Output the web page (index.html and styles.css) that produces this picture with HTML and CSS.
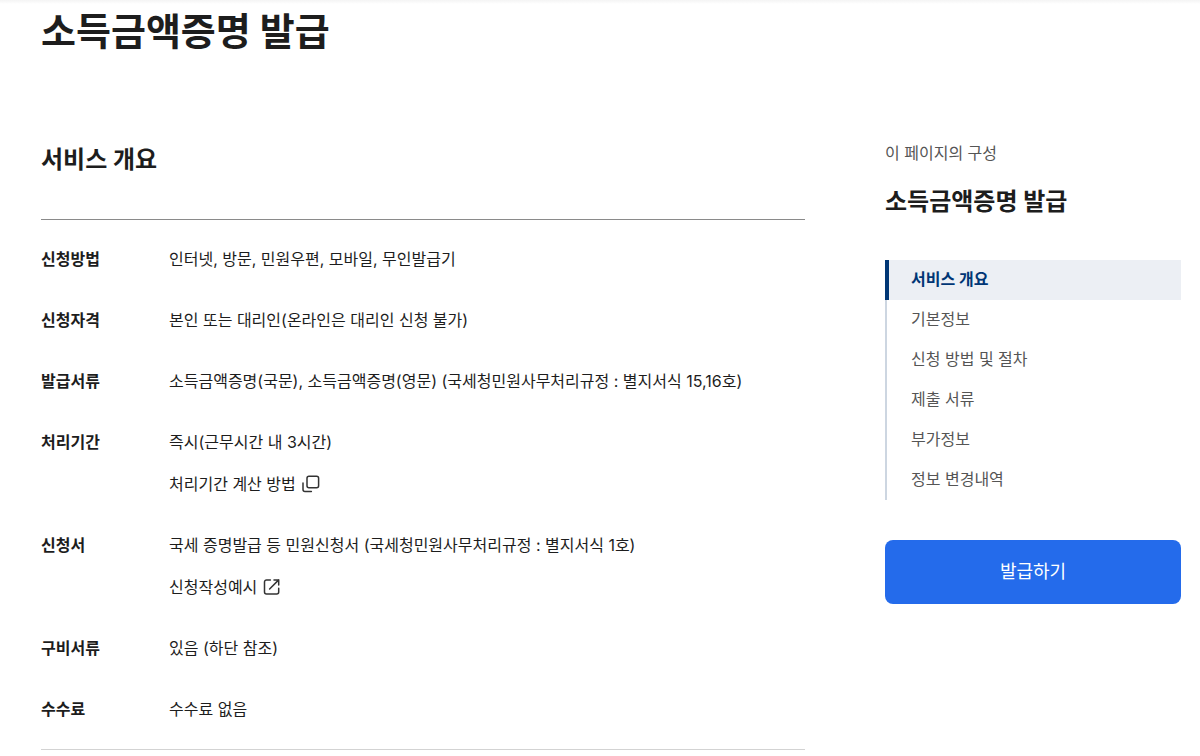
FILE: index.html
```
<!DOCTYPE html>
<html lang="ko">
<head>
    <meta charset="UTF-8">
    <meta name="viewport" content="width=device-width, initial-scale=1.0">
    <title>소득금액증명 발급</title>
    <link rel="stylesheet" href="styles.css">
</head>
<body>
    <div class="page">
        <h1>소득금액증명 발급</h1>

        <div class="content">
            <main class="main">
                <h2 id="overview">서비스 개요</h2>

                <dl class="info-list">
                    <div class="info-row">
                        <dt>신청방법</dt>
                        <dd>인터넷, 방문, 민원우편, 모바일, 무인발급기</dd>
                    </div>
                    <div class="info-row">
                        <dt>신청자격</dt>
                        <dd>본인 또는 대리인(온라인은 대리인 신청 불가)</dd>
                    </div>
                    <div class="info-row">
                        <dt>발급서류</dt>
                        <dd>소득금액증명(국문), 소득금액증명(영문) (국세청민원사무처리규정 : 별지서식 15,16호)</dd>
                    </div>
                    <div class="info-row">
                        <dt>처리기간</dt>
                        <dd>
                            <p>즉시(근무시간 내 3시간)</p>
                            <button type="button" class="text-link">
                                처리기간 계산 방법
                                <svg class="icon" viewBox="0 0 20 20" aria-hidden="true">
                                    <rect x="6" y="2.2" width="11.6" height="11.6" rx="2"/>
                                    <path d="M2 9v6.6a2 2 0 0 0 2 2h6.4"/>
                                </svg>
                            </button>
                        </dd>
                    </div>
                    <div class="info-row">
                        <dt>신청서</dt>
                        <dd>
                            <p>국세 증명발급 등 민원신청서 (국세청민원사무처리규정 : 별지서식 1호)</p>
                            <a href="#" class="text-link">
                                신청작성예시
                                <svg class="icon" viewBox="0 0 20 20" aria-hidden="true">
                                    <path d="M8.4 2.9H4.5a2 2 0 0 0-2 2v10.2a2 2 0 0 0 2 2h10.2a2 2 0 0 0 2-2V11.2"/>
                                    <path d="M12 2.9h4.7V8M16.7 2.9L7.6 12"/>
                                </svg>
                            </a>
                        </dd>
                    </div>
                    <div class="info-row">
                        <dt>구비서류</dt>
                        <dd>있음 (하단 참조)</dd>
                    </div>
                    <div class="info-row">
                        <dt>수수료</dt>
                        <dd>수수료 없음</dd>
                    </div>
                </dl>
            </main>

            <aside class="side">
                <p class="side-label">이 페이지의 구성</p>
                <p class="side-title">소득금액증명 발급</p>
                <nav class="side-nav">
                    <a href="#overview" class="active">서비스 개요</a>
                    <a href="#">기본정보</a>
                    <a href="#">신청 방법 및 절차</a>
                    <a href="#">제출 서류</a>
                    <a href="#">부가정보</a>
                    <a href="#">정보 변경내역</a>
                </nav>
                <button type="button" class="btn-issue">발급하기</button>
            </aside>
        </div>
    </div>
</body>
</html>
```
FILE: styles.css
```
* {
    box-sizing: border-box;
    margin: 0;
    padding: 0;
}
body {
    font-family: Inter, "Noto Sans CJK KR", sans-serif;
    font-size: 16px;
    line-height: 26px;
    color: #1d1d1d;
    background: #fff linear-gradient(#f4f4f4, #fff) 0 0 / 100% 4px no-repeat;
}
a {
    color: inherit;
    text-decoration: none;
}
button {
    font: inherit;
    border: none;
    cursor: pointer;
}
.page {
    padding: 3px 19px 6px 41px;
}
h1 {
    font-size: 38px;
    line-height: 56px;
}
.content {
    display: flex;
    align-items: flex-start;
    gap: 80px;
    margin-top: 81px;
}
.main {
    flex: 1;
    min-width: 0;
}
h2 {
    font-size: 24px;
    line-height: 40px;
}
.info-list {
    display: flex;
    flex-direction: column;
    gap: 35px;
    margin-top: 39px;
    padding: 26px 0 27px;
    border-top: 1px solid #8a8a8a;
    border-bottom: 1px solid #d3d3d3;
}
.info-row {
    display: flex;
}
dt {
    flex: 0 0 128px;
    font-weight: bold;
}
dd {
    flex: 1;
}
.text-link {
    display: flex;
    align-items: center;
    gap: 5px;
    width: fit-content;
    margin-top: 16px;
    color: inherit;
    background: none;
}
.icon {
    width: 20px;
    height: 20px;
    fill: none;
    stroke: #333;
    stroke-width: 1.5;
    stroke-linecap: round;
    stroke-linejoin: round;
}
.side {
    flex: 0 0 296px;
}
.side-label {
    color: #555;
}
.side-title {
    margin-top: 16px;
    font-size: 24px;
    font-weight: bold;
    line-height: 40px;
}
.side-nav {
    display: flex;
    flex-direction: column;
    margin-top: 38px;
}
.side-nav a {
    padding: 0 0 2px 24px;
    border-left: 2px solid #cdd6e1;
    line-height: 38px;
    color: #555;
}
.side-nav a.active {
    padding-left: 22px;
    border-left: 4px solid #003675;
    background-color: #eceff4;
    color: #003675;
    font-weight: bold;
}
.btn-issue {
    width: 100%;
    height: 64px;
    margin-top: 40px;
    border-radius: 8px;
    background-color: #246beb;
    color: #fff;
    font-size: 18px;
}
```
